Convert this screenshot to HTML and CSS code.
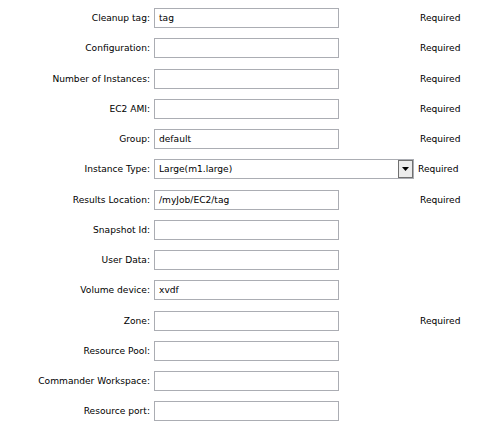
FILE: index.html
```html
<!DOCTYPE html>
<html>
<head>
<meta charset="utf-8">
<link rel="stylesheet" href="styles.css">
</head>
<body>
<div class="form">
  <label class="lbl">Cleanup tag:</label><div class="field"><div class="input">tag</div></div><div class="req">Required</div>
  <label class="lbl">Configuration:</label><div class="field"><div class="input"></div></div><div class="req">Required</div>
  <label class="lbl">Number of Instances:</label><div class="field"><div class="input"></div></div><div class="req">Required</div>
  <label class="lbl">EC2 AMI:</label><div class="field"><div class="input"></div></div><div class="req">Required</div>
  <label class="lbl">Group:</label><div class="field"><div class="input">default</div></div><div class="req">Required</div>
  <label class="lbl">Instance Type:</label><div class="field"><div class="select"><span class="sel-text">Large(m1.large)</span><span class="sel-btn"><svg width="7" height="4" viewBox="0 0 7 4"><path d="M0 0H7L3.5 4Z" fill="#000"/></svg></span></div></div><div class="req near">Required</div>
  <label class="lbl">Results Location:</label><div class="field"><div class="input">/myJob/EC2/tag</div></div><div class="req">Required</div>
  <label class="lbl">Snapshot Id:</label><div class="field"><div class="input"></div></div><div class="req"></div>
  <label class="lbl">User Data:</label><div class="field"><div class="input"></div></div><div class="req"></div>
  <label class="lbl">Volume device:</label><div class="field"><div class="input">xvdf</div></div><div class="req"></div>
  <label class="lbl">Zone:</label><div class="field"><div class="input"></div></div><div class="req">Required</div>
  <label class="lbl">Resource Pool:</label><div class="field"><div class="input"></div></div><div class="req"></div>
  <label class="lbl">Commander Workspace:</label><div class="field"><div class="input"></div></div><div class="req"></div>
  <label class="lbl">Resource port:</label><div class="field"><div class="input"></div></div><div class="req"></div>
</div>
</body>
</html>
```
FILE: styles.css
```css
html, body {
  margin: 0;
  padding: 0;
  background: #fff;
}
body {
  font-family: "DejaVu Sans", Verdana, sans-serif;
  font-size: 9.1px;
  color: #000;
}
.form {
  display: grid;
  grid-template-columns: 152px 262px auto;
  grid-auto-rows: 20px;
  row-gap: 10.27px;
  column-gap: 0;
  padding-top: 8px;
}
.lbl {
  display: flex;
  align-items: center;
  justify-content: flex-end;
  padding-right: 2px;
  white-space: nowrap;
}
.field {
  display: flex;
  align-items: center;
  padding-left: 2px;
}
.input {
  box-sizing: border-box;
  width: 185px;
  height: 20px;
  border: 1px solid #abadb3;
  padding: 0 4px;
  display: flex;
  align-items: center;
  white-space: nowrap;
}
.select {
  box-sizing: border-box;
  width: 262px;
  height: 20px;
  border: 1px solid #abadb3;
  display: flex;
  align-items: center;
  justify-content: space-between;
}
.sel-text {
  padding-left: 4px;
}
.sel-btn {
  box-sizing: border-box;
  width: 15px;
  height: 18px;
  border: 1px solid #707070;
  background: #ececec;
  display: flex;
  align-items: center;
  justify-content: center;
}
.req {
  display: flex;
  align-items: center;
  padding-left: 6px;
}
.req.near {
  padding-left: 4px;
}
```
